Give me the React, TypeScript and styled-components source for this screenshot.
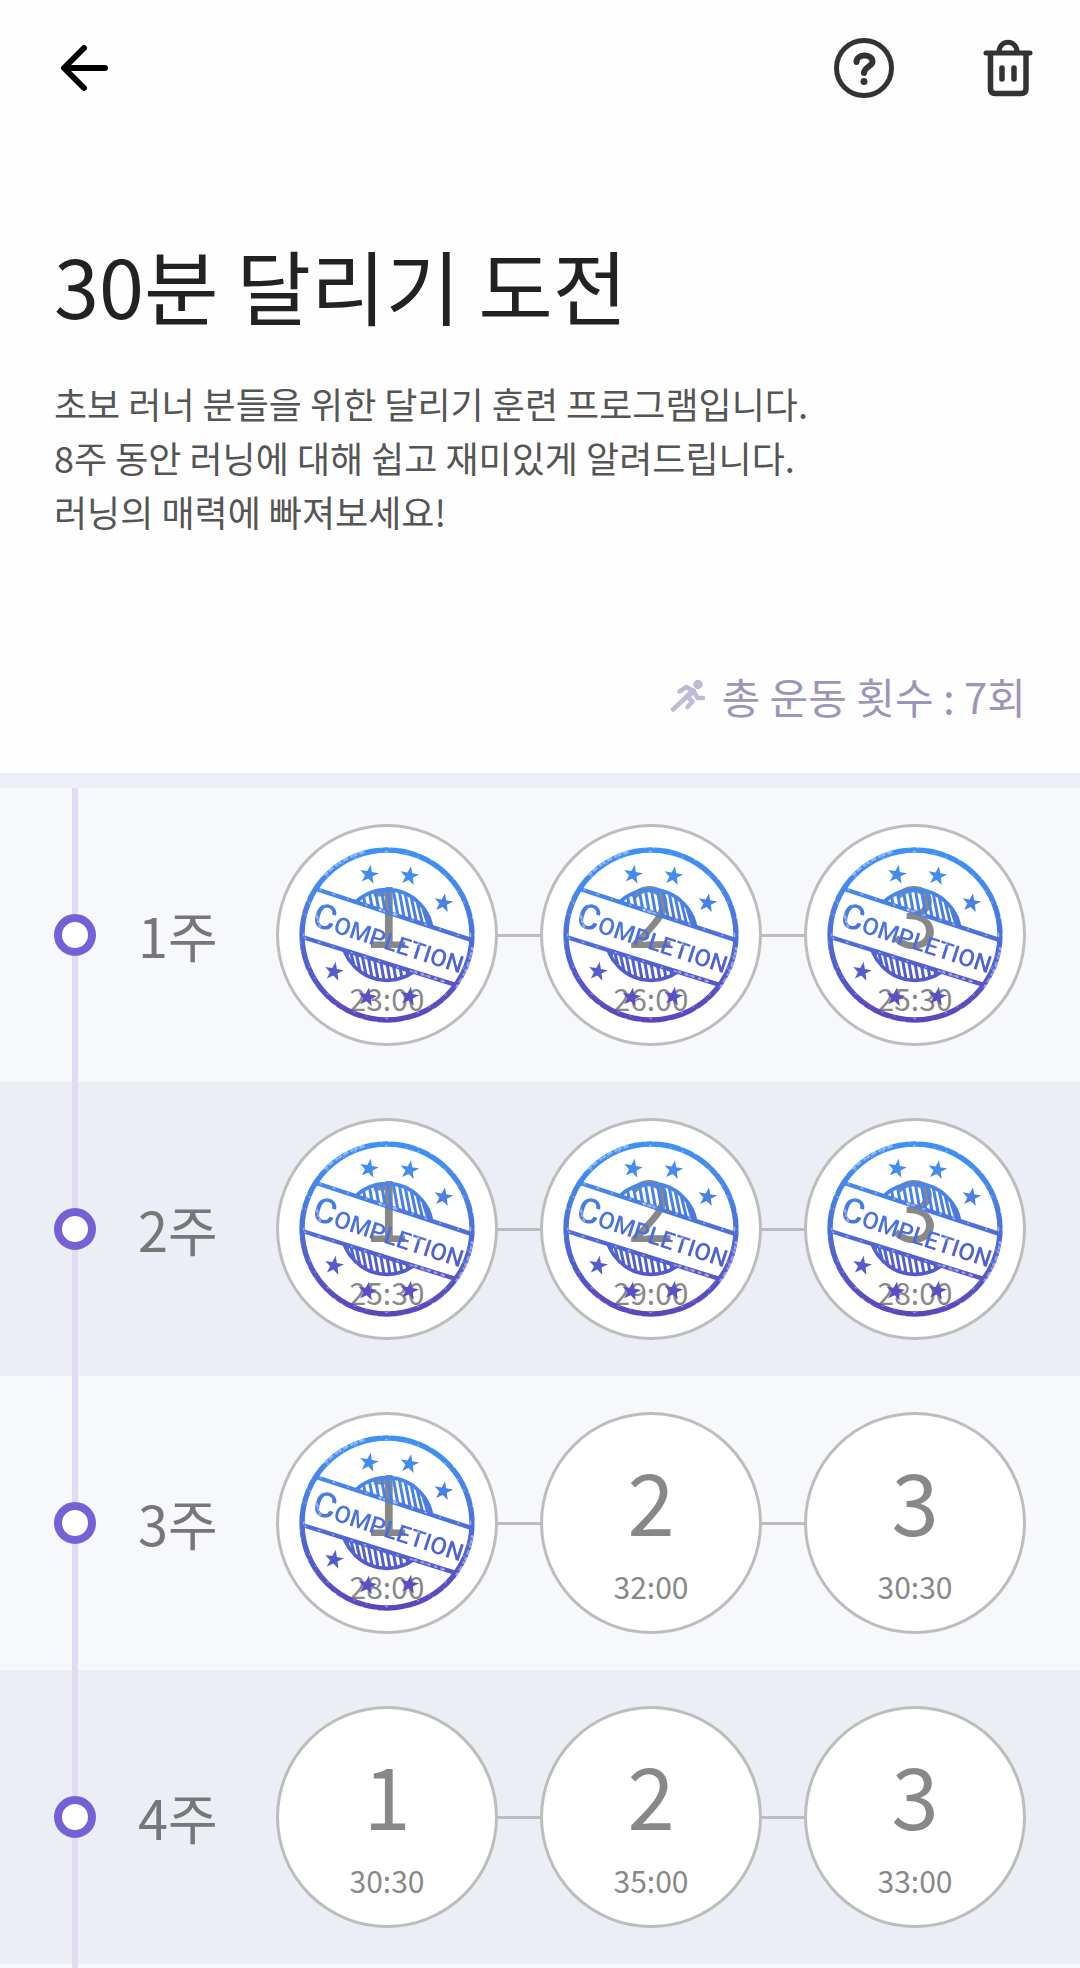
import React from 'react';
import styled, { createGlobalStyle } from 'styled-components';

const GlobalStyle = createGlobalStyle`
  * { box-sizing: border-box; }
  body {
    margin: 0;
    background: #fefefe;
    font-family: "Noto Sans CJK KR", "Noto Sans", sans-serif;
    color: #222222;
  }
`;

const Page = styled.div`
  display: flex;
  flex-direction: column;
  min-height: 100vh;
`;

const TopBar = styled.header`
  display: flex;
  align-items: center;
  justify-content: space-between;
  height: 136px;
  padding: 0 36px 0 48px;
`;

const Actions = styled.div`
  display: flex;
  gap: 72px;
`;

const IconButton = styled.button`
  display: flex;
  padding: 0;
  border: 0;
  background: none;
  color: #333333;
  cursor: pointer;
`;

const Intro = styled.section`
  padding: 88px 54px 0;
`;

const Title = styled.h1`
  margin: 0;
  font-size: 81px;
  font-weight: 400;
  line-height: 120px;
`;

const Description = styled.p`
  margin: 32px 0 0;
  font-size: 36px;
  line-height: 54px;
  color: #555555;
  white-space: pre-line;
`;

const Total = styled.div`
  display: flex;
  align-items: center;
  justify-content: flex-end;
  gap: 14px;
  padding: 123px 54px 42px;
  font-size: 42px;
  line-height: 70px;
  color: #9c95b9;
`;

const Weeks = styled.ol`
  display: flex;
  flex: 1;
  flex-direction: column;
  margin: 0;
  padding: 0;
  border-top: 15px solid #eceff7;
  list-style: none;
`;

const Week = styled.li`
  display: flex;
  align-items: center;
  height: 294px;
  padding: 0 54px;
  background: #f7f8fc;
  &:nth-child(even) { background: #eceef6; }
`;

const Rail = styled.div`
  display: flex;
  flex-direction: column;
  align-items: center;
  align-self: stretch;
  width: 42px;
`;

const RailLine = styled.span`
  flex: 1;
  width: 6px;
  background: #e1dcf3;
`;

const RailDot = styled.span`
  width: 42px;
  height: 42px;
  border: 8px solid #7560d6;
  border-radius: 50%;
  background: #ffffff;
`;

const WeekEnd = styled.li`
  display: flex;
  flex: 1;
  min-height: 4px;
  padding: 0 54px;
  background: #f7f8fc;
`;

const WeekName = styled.h2`
  flex: 1;
  margin: 0;
  padding-left: 42px;
  font-size: 54px;
  font-weight: 400;
  line-height: 80px;
  color: #777777;
`;

const Sessions = styled.div`
  display: flex;
  align-items: center;
`;

const Link = styled.span`
  width: 42px;
  height: 3px;
  background: #bdbdbd;
`;

const Session = styled.button`
  position: relative;
  display: flex;
  flex-direction: column;
  align-items: center;
  width: 222px;
  height: 222px;
  padding: 34px 0 0;
  border: 3px solid #bdbdbd;
  border-radius: 50%;
  background: #ffffff;
  font-family: inherit;
  color: #888888;
  cursor: pointer;
`;

const Day = styled.span`
  font-size: 85px;
  line-height: 100px;
`;

const Time = styled.span`
  margin-top: 14px;
  font-size: 30px;
  line-height: 46px;
`;

const StampArt = styled.svg`
  position: absolute;
  inset: 20px;
  width: 176px;
  height: 176px;
`;

const STARS = [[297, 179], [418, 183], [520, 264], [192, 470], [292, 547], [418, 545]];

const starPoints = (cx: number, cy: number) =>
  Array.from({ length: 10 }, (_, i) => {
    const r = i % 2 ? 12 : 30;
    const a = (i * 36 - 80) * (Math.PI / 180);
    return `${(cx + r * Math.cos(a)).toFixed(1)},${(cy + r * Math.sin(a)).toFixed(1)}`;
  }).join(' ');

const inkStops = (
  <>
    <stop offset="0" stopColor="#3d92f3" />
    <stop offset="0.25" stopColor="#4688ea" />
    <stop offset="0.6" stopColor="#4f66d4" />
    <stop offset="1" stopColor="#5d43bb" />
  </>
);

function Stamp({ id }: { id: string }) {
  const ink = `url(#${id}-ink)`;
  return (
    <StampArt viewBox="87 96 528 528" role="img" aria-label="완료">
      <defs>
        <linearGradient id={`${id}-ink`} gradientUnits="userSpaceOnUse" x1="351" y1="97" x2="351" y2="623">
          {inkStops}
        </linearGradient>
        <linearGradient
          id={`${id}-letters`}
          gradientUnits="userSpaceOnUse"
          x1="351"
          y1="97"
          x2="351"
          y2="623"
          gradientTransform="rotate(-18) translate(-122 -330)"
        >
          {inkStops}
        </linearGradient>
        <clipPath id={`${id}-top`}><path d="M140 222 608 376V90H140Z" /></clipPath>
        <clipPath id={`${id}-bottom`}><path d="M97 367 562 512V640H97Z" /></clipPath>
        <mask id={`${id}-wear`} maskUnits="userSpaceOnUse" x="80" y="90" width="540" height="540">
          <rect x="80" y="90" width="540" height="540" fill="#fff" />
          <g fill="none" stroke="#000" strokeLinecap="round">
            <circle cx="351" cy="360" r="262" strokeWidth="3" strokeDasharray="3 39 6 61 2 22 5 83" opacity=".5" />
            <circle cx="351" cy="360" r="251" strokeWidth="3" strokeDasharray="6 57 2 35 4 92" opacity=".5" />
            <path d="M167 178A258 258 0 0 1 280 112M560 515A258 258 0 0 0 606 400" strokeWidth="8" strokeDasharray="5 12 10 14 3 9" opacity=".4" />
            <path d="M150 224 600 372M105 369 555 510" strokeWidth="4" strokeDasharray="3 38 6 41 2 55" opacity=".5" />
            <path d="M435 471 530 502" strokeWidth="8" strokeDasharray="4 17" opacity=".4" />
            <path d="M136 290 150 335M445 385 465 420M330 285 380 300" strokeWidth="8" strokeDasharray="3 10 8 9" opacity=".4" />
          </g>
        </mask>
      </defs>
      <g mask={`url(#${id}-wear)`} fill={ink} stroke="none">
        <circle cx="351" cy="360" r="255" fill="none" stroke={ink} strokeWidth="16" />
        <path d="M138 222 608 376M97 366 564 512" fill="none" stroke={ink} strokeWidth="13" />
        {['top', 'bottom'].map((part) => (
          <g key={part} clipPath={`url(#${id}-${part})`} fill="none" stroke={ink}>
            <circle cx="351" cy="360" r="136" strokeWidth="11" />
            {Array.from({ length: 15 }, (_, i) => {
              const x = 230 + i * 18;
              const h = Math.sqrt(Math.max(0, 136 * 136 - (x - 351) * (x - 351)));
              return part === 'top'
                ? <path key={i} d={`M${x - 4} ${360 - h} ${x + 20} 360`} strokeWidth="9" />
                : <path key={i} d={`M${x - 20} 360 ${x + 4} ${360 + h}`} strokeWidth="9" />;
            })}
          </g>
        ))}
        {STARS.map(([x, y]) => <polygon key={`${x}-${y}`} points={starPoints(x, y)} />)}
        <text
          transform="translate(122 330) rotate(18)"
          fill={`url(#${id}-letters)`}
          fontFamily="Roboto, 'Open Sans', sans-serif"
          fontWeight="500"
          fontSize="72"
        >
          <tspan fontSize="104">C</tspan>OMPLETION
        </text>
      </g>
    </StampArt>
  );
}

const BackIcon = () => (
  <svg width="72" height="72" viewBox="0 0 72 72" fill="none" stroke="#000" strokeWidth="6" strokeLinecap="round" strokeLinejoin="round">
    <path d="M57 36H17M36 16 16 36 36 56" />
  </svg>
);

const HelpIcon = () => (
  <svg width="72" height="72" viewBox="0 0 72 72" fill="none" stroke="currentColor" strokeWidth="5" strokeLinecap="round" strokeLinejoin="round">
    <circle cx="36" cy="36" r="27.5" />
    <path d="M28.5 30C28.5 21.5 44.5 21.5 44.5 29.5C44.5 34.5 36 35 36 41" strokeWidth="6" />
    <circle cx="36" cy="49.5" r="3.5" fill="currentColor" stroke="none" />
  </svg>
);

const TrashIcon = () => (
  <svg width="72" height="72" viewBox="0 0 72 72" fill="none" stroke="currentColor" strokeWidth="5" strokeLinecap="round" strokeLinejoin="round">
    <path d="M14 21H58M27 20C27 7 45 7 45 20" />
    <path d="M18.5 22V57Q18.5 61.5 23 61.5H49Q54 61.5 54 57V22M30 36V47M42 36V47" strokeWidth="5.5" />
  </svg>
);

const RunnerIcon = () => (
  <svg width="40" height="40" viewBox="0 -2 40 40" fill="none" stroke="#bfbad6" strokeWidth="4.5" strokeLinecap="round" strokeLinejoin="round" aria-hidden="true">
    <circle cx="30" cy="6.5" r="4.7" fill="#bfbad6" stroke="none" />
    <path d="M11.5 13.5 18.5 9 26 13.5 29.5 20H35" />
    <path d="M5 31.5 19 18.5 24.5 23.5 19.5 29" />
    <path d="M25 13 19.5 18.5" strokeWidth="6" />
  </svg>
);

const WEEKS = [
  { times: ['23:00', '26:00', '25:30'], done: 3 },
  { times: ['25:30', '29:00', '28:00'], done: 3 },
  { times: ['28:00', '32:00', '30:30'], done: 1 },
  { times: ['30:30', '35:00', '33:00'], done: 0 },
];

export default function App() {
  return (
    <>
      <GlobalStyle />
      <Page>
        <TopBar>
          <IconButton aria-label="뒤로"><BackIcon /></IconButton>
          <Actions>
            <IconButton aria-label="도움말"><HelpIcon /></IconButton>
            <IconButton aria-label="삭제"><TrashIcon /></IconButton>
          </Actions>
        </TopBar>
        <Intro>
          <Title>30분 달리기 도전</Title>
          <Description>
            {'초보 러너 분들을 위한 달리기 훈련 프로그램입니다.\n8주 동안 러닝에 대해 쉽고 재미있게 알려드립니다.\n러닝의 매력에 빠져보세요!'}
          </Description>
        </Intro>
        <Total><RunnerIcon />총 운동 횟수 : 7회</Total>
        <Weeks>
          {WEEKS.map((week, w) => (
            <Week key={w}>
              <Rail><RailLine /><RailDot /><RailLine /></Rail>
              <WeekName>{`${w + 1}주`}</WeekName>
              <Sessions>
                {week.times.map((time, d) => (
                  <React.Fragment key={d}>
                    {d > 0 && <Link />}
                    <Session>
                      <Day>{d + 1}</Day>
                      <Time>{time}</Time>
                      {d < week.done && <Stamp id={`stamp-${w}-${d}`} />}
                    </Session>
                  </React.Fragment>
                ))}
              </Sessions>
            </Week>
          ))}
          <WeekEnd><Rail><RailLine /></Rail></WeekEnd>
        </Weeks>
      </Page>
    </>
  );
}
